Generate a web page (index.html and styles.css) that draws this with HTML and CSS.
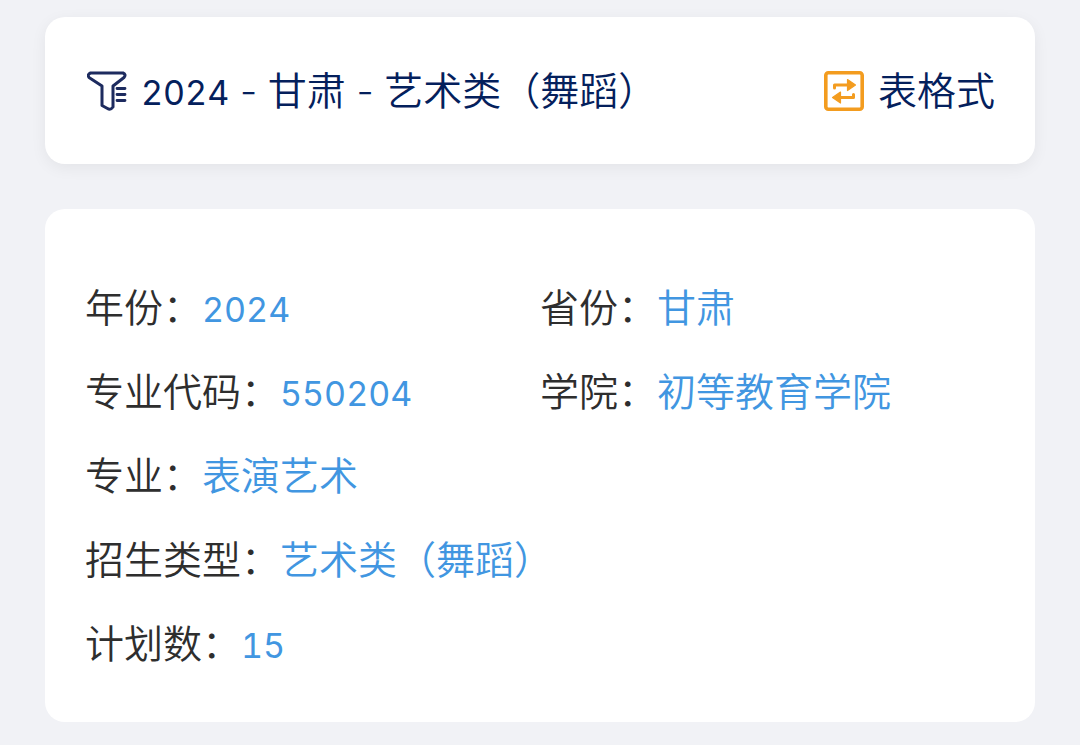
FILE: index.html
```html
<!DOCTYPE html>
<html lang="zh-CN">
<head>
<meta charset="utf-8">
<meta name="viewport" content="width=device-width, initial-scale=1">
<title>招生计划</title>
<link rel="stylesheet" href="styles.css">
</head>
<body>
<main class="page">
  <header class="card toolbar">
    <button class="tool" type="button">
      <svg class="icon" viewBox="0 0 40 40" fill="none" stroke="#1d2b5f" stroke-width="3" stroke-linejoin="round" stroke-linecap="round" aria-hidden="true">
        <path d="M3.500 2H36Q39.500 3.500 37 6.500L26 15V36Q23.500 39.500 20.500 37.500L15 34.500V15L2 6.500Q0 3.500 3.500 2Z"/>
        <path d="M30 17.500H38M30 23.500H38M30 29.500H38" stroke-width="2.800"/>
      </svg>
      <span><span class="latin">2024</span><span class="latin dash"> - </span>甘肃<span class="latin dash"> - </span>艺术类（舞蹈）</span>
    </button>
    <button class="tool" type="button">
      <svg class="icon" viewBox="0 0 40 40" fill="none" stroke="#f39c1f" stroke-width="3" stroke-linejoin="round" stroke-linecap="round" aria-hidden="true">
        <rect x="1.800" y="1.800" width="36.400" height="36.400" rx="2.500" stroke-width="3.600"/>
        <path d="M10.500 17V14H24"/>
        <path d="M23.500 8.500L31.500 14L23.500 19.500Z" fill="#f39c1f" stroke-width="1.200"/>
        <path d="M29.500 23.500V26.500H16"/>
        <path d="M16.500 21L8.500 26.500L16.500 32Z" fill="#f39c1f" stroke-width="1.200"/>
      </svg>
      <span>表格式</span>
    </button>
  </header>
  <dl class="card details">
    <div class="field"><dt>年份：</dt><dd class="latin">2024</dd></div>
    <div class="field"><dt>省份：</dt><dd>甘肃</dd></div>
    <div class="field"><dt>专业代码：</dt><dd class="latin">550204</dd></div>
    <div class="field"><dt>学院：</dt><dd>初等教育学院</dd></div>
    <div class="field wide"><dt>专业：</dt><dd>表演艺术</dd></div>
    <div class="field wide"><dt>招生类型：</dt><dd>艺术类（舞蹈）</dd></div>
    <div class="field wide"><dt>计划数：</dt><dd class="latin">15</dd></div>
  </dl>
</main>
</body>
</html>
```
FILE: styles.css
```css
* {
  box-sizing: border-box;
}

body {
  margin: 0;
  background: #f1f2f6;
  color: #2e2e2e;
  font-family: "Noto Sans CJK SC", sans-serif;
  font-size: 39px;
  font-weight: 350;
  line-height: 60px;
}

.page {
  display: flex;
  flex-direction: column;
  gap: 45px;
  padding: 17px 45px 23px;
}

.card {
  margin: 0;
  border-radius: 20px;
  background: #fff;
}

.toolbar {
  display: flex;
  align-items: center;
  justify-content: space-between;
  padding: 41px 40px 46px;
  box-shadow: 0 4px 16px rgba(0, 0, 0, 0.06);
}

.tool {
  display: flex;
  align-items: center;
  gap: 14px;
  padding: 0;
  border: 0;
  background: none;
  color: #04205c;
  font: inherit;
  cursor: pointer;
}

.icon {
  flex: none;
  width: 40px;
  height: 40px;
  margin: 6px 0 0 2px;
}

.latin {
  font-family: Inter, "Noto Sans CJK SC", sans-serif;
  font-size: 34px;
  font-weight: 400;
  font-variant-numeric: tabular-nums;
  line-height: 40px;
  white-space: pre;
}

.dash {
  font-size: 38px;
  font-weight: 300;
  font-variant-numeric: normal;
}

.details {
  display: grid;
  grid-template-columns: 1fr 1fr;
  padding: 66px 40px 27px;
}

.field {
  display: flex;
  align-items: baseline;
  min-height: 84px;
}

.wide {
  grid-column: 1 / -1;
}

.field dd {
  margin: 0;
  color: #4196e1;
}
```
